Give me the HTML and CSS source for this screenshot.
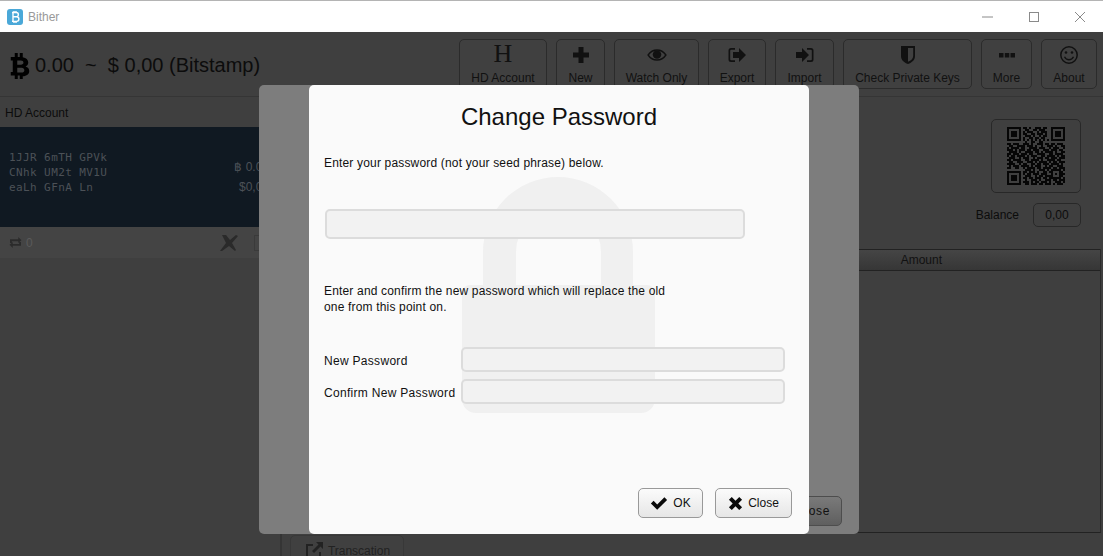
FILE: index.html
```html
<!DOCTYPE html>
<html lang="en">
<head>
    <meta charset="UTF-8">
    <title>Bither</title>
    <link rel="stylesheet" href="styles.css">
</head>
<body>

<div class="titlebar">
    <svg class="app-icon" viewBox="0 0 16 16"><rect width="16" height="16" rx="3" fill="#4aa8d8"/><path d="M6 3v10M5 3.500h4.200a2 2 0 0 1 0 4.300H6h3.600a2.200 2.200 0 0 1 0 4.600H5M7 2v2M9 2v2M7 12v2M9 12v2" fill="none" stroke="#fff" stroke-width="1.400"/></svg>
    <span class="app-name">Bither</span>
    <div class="window-controls">
        <svg viewBox="0 0 12 12"><path d="M0 6h11" stroke="#8a8a8a" fill="none"/></svg>
        <svg viewBox="0 0 12 12"><rect x="1.500" y="1.500" width="9" height="9" stroke="#8a8a8a" fill="none"/></svg>
        <svg viewBox="0 0 12 12"><path d="M1 1l10 10M11 1L1 11" stroke="#8a8a8a" fill="none"/></svg>
    </div>
</div>

<div class="app">
    <header class="topbar">
        <div class="total">
            <svg class="btc" viewBox="0.500 0 19.500 28"><path fill-rule="evenodd" d="M1 5h4V1h3v4h2V1h3v4.200c3.500.6 5.500 2.600 5.500 5.300 0 2-1 3.300-2.700 3.900 2.300.6 3.700 2.200 3.700 4.500 0 3.200-2.400 5-6.500 5.400V27h-3v-3.500H8V27H5v-3.500H1v-3.500h2V8.500H1zM7.500 8.500v4.300h3.700c1.500 0 2.500-.9 2.500-2.200s-1-2.100-2.500-2.100zM7.500 15.800v4.700h4.300c1.700 0 2.800-.9 2.800-2.300 0-1.500-1.100-2.400-2.800-2.400z"/></svg>
            <span>0.00 &nbsp;~&nbsp; $ 0,00 (Bitstamp)</span>
        </div>
        <nav class="toolbar">
            <button class="tool tool-hd"><span class="tool-h">H</span>HD Account</button>
            <button class="tool tool-new"><svg viewBox="0 0 20 20"><path d="M7.500 2h5v5.500H18v5h-5.500V18h-5v-5.500H2v-5h5.500z"/></svg>New</button>
            <button class="tool tool-watch"><svg viewBox="0 0 22 20"><path d="M1.200 10c2.500-3.700 5.800-5.500 9.800-5.500s7.300 1.800 9.800 5.500c-2.500 3.700-5.800 5.500-9.800 5.500S3.700 13.700 1.200 10z" fill="none" stroke="currentColor" stroke-width="1.500"/><circle cx="11" cy="9.500" r="4.700"/></svg>Watch Only</button>
            <button class="tool tool-export"><svg viewBox="0 0 20 20"><path d="M8 3H4a2.500 2.500 0 0 0-2.500 2.500v9A2.500 2.500 0 0 0 4 17h4v-1.800H4.200a1 1 0 0 1-1-1V5.800a1 1 0 0 1 1-1H8z"/><path d="M6 7h6V3l7 7-7 7v-4H6z"/></svg>Export</button>
            <button class="tool tool-import"><svg viewBox="0 0 20 20"><path d="M12 3h4a2.500 2.500 0 0 1 2.500 2.500v9A2.500 2.500 0 0 1 16 17h-4v-1.800h3.800a1 1 0 0 0 1-1V5.800a1 1 0 0 0-1-1H12z"/><path d="M1 7h6V3l7 7-7 7v-4H1z"/></svg>Import</button>
            <button class="tool tool-check"><svg viewBox="0 0 20 20"><path fill-rule="evenodd" d="M3 1h14v10c0 4-3 6.500-7 8-4-1.500-7-4-7-8zM10 3v13.800c3-1.200 5.200-3.200 5.200-5.800V3z"/></svg>Check Private Keys</button>
            <button class="tool tool-more"><svg viewBox="0 0 20 20"><path d="M2 8h4.500v4.500H2zM7.800 8h4.500v4.500H7.800zM13.500 8H18v4.500h-4.500z"/></svg>More</button>
            <button class="tool tool-about"><svg viewBox="0 0 20 20"><circle cx="10" cy="10" r="8.200" fill="none" stroke="currentColor" stroke-width="1.500"/><circle cx="7" cy="7.500" r="1.300"/><circle cx="13" cy="7.500" r="1.300"/><path d="M5.500 11.800c1 2 2.600 3 4.500 3s3.500-1 4.500-3" fill="none" stroke="currentColor" stroke-width="1.400"/></svg>About</button>
        </nav>
    </header>

    <div class="content">
        <aside class="sidebar">
            <div class="sidebar-title">HD Account</div>
            <div class="address-card">
                <div class="address">1JJR 6mTH GPVk<br>CNhk UM2t MV1U<br>eaLh GFnA Ln</div>
                <div class="address-balance">
                    <span>&#3647; 0.00</span>
                    <span>$0,00</span>
                </div>
            </div>
            <div class="address-foot">
                <svg class="foot-repeat" viewBox="0 0 14 12"><path d="M1 6.500V2.500h9V0l3.500 3.500L10 6.500V4.500H3v2zM13 5.500v4H4V12L.5 8.500 4 5.500v2h7v-2z"/></svg>
                <span>0</span>
                <svg class="foot-tools" viewBox="0 0 20 18"><path d="M2 1h4l4 5 6-5 2 1-6 7 4 7-1 1-6-5-7 5H0l6-8z"/></svg>
                <span class="foot-box"></span>
            </div>
        </aside>

        <main class="detail">
            <div class="detail-top">
                <div class="qr-box">
                    <svg class="qr" viewBox="0 0 29 29" shape-rendering="crispEdges">
                        <path class="qr-solid" d="M0 0h7v7H0zM1 1v5h5V1zM2 2h3v3H2zM22 0h7v7h-7zM23 1v5h5V1zM24 2h3v3h-3zM0 22h7v7H0zM1 23v5h5v-5zM2 24h3v3H2z"/>
                        <path class="qr-runs" d="M8 .5h2M11 .5h1M14 .5h3M18 .5h2M9 1.500h2M13 1.500h2M16 1.500h3M8 2.500h1M10 2.500h3M15 2.500h1M17 2.500h3M8 3.500h2M12 3.500h2M15 3.500h3M19 3.500h1M9 4.500h3M13 4.500h1M16 4.500h1M18 4.500h2M8 5.500h1M11 5.500h2M14 5.500h2M17 5.500h2M8 6.500h1M10 6.500h1M12 6.500h1M14 6.500h1M16 6.500h1M18 6.500h1M20 6.500h1M9 7.500h1M12 7.500h2M16 7.500h2M0 8.500h2M3 8.500h3M8 8.500h3M12 8.500h1M15 8.500h3M19 8.500h2M22 8.500h2M25 8.500h3M1 9.500h2M5 9.500h4M10 9.500h3M14 9.500h1M17 9.500h1M20 9.500h3M24 9.500h1M27 9.500h2M0 10.500h1M2 10.500h4M7 10.500h2M11 10.500h4M16 10.500h3M21 10.500h1M23 10.500h3M28 10.500h1M0 11.500h3M4 11.500h1M6 11.500h3M10 11.500h2M13 11.500h3M18 11.500h3M22 11.500h3M26 11.500h2M1 12.500h4M6 12.500h1M9 12.500h4M14 12.500h2M17 12.500h1M19 12.500h4M24 12.500h1M27 12.500h2M0 13.500h2M3 13.500h3M7 13.500h3M11 13.500h2M15 13.500h4M21 13.500h2M24 13.500h4M0 14.500h1M2 14.500h2M5 14.500h4M10 14.500h1M12 14.500h3M17 14.500h2M20 14.500h4M25 14.500h1M27 14.500h2M1 15.500h3M6 15.500h1M8 15.500h3M13 15.500h1M15 15.500h3M19 15.500h2M22 15.500h3M26 15.500h3M0 16.500h2M3 16.500h4M9 16.500h2M12 16.500h4M17 16.500h1M20 16.500h4M25 16.500h2M1 17.500h2M5 17.500h3M10 17.500h3M14 17.500h1M16 17.500h4M21 17.500h1M23 17.500h2M26 17.500h3M0 18.500h4M6 18.500h1M8 18.500h2M12 18.500h2M15 18.500h2M18 18.500h3M22 18.500h4M27 18.500h1M1 19.500h1M3 19.500h3M7 19.500h4M12 19.500h1M14 19.500h3M19 19.500h1M21 19.500h2M25 19.500h3M0 20.500h2M4 20.500h2M8 20.500h1M10 20.500h4M15 20.500h2M18 20.500h4M23 20.500h2M26 20.500h3M9 21.500h3M13 21.500h1M16 21.500h3M20 21.500h1M22 21.500h5M28 21.500h1M8 22.500h2M11 22.500h3M15 22.500h1M18 22.500h2M21 22.500h2M26 22.500h2M8 23.500h1M10 23.500h2M13 23.500h3M17 23.500h3M22 23.500h1M24 23.500h1M26 23.500h3M9 24.500h3M14 24.500h1M16 24.500h2M19 24.500h4M26 24.500h2M8 25.500h2M11 25.500h2M14 25.500h3M18 25.500h2M21 25.500h6M28 25.500h1M9 26.500h1M12 26.500h3M16 26.500h1M19 26.500h3M23 26.500h2M26 26.500h3M8 27.500h3M12 27.500h1M14 27.500h2M17 27.500h3M21 27.500h1M24 27.500h3M28 27.500h1M9 28.500h2M12 28.500h3M16 28.500h2M19 28.500h3M23 28.500h1M25 28.500h3"/>
                    </svg>
                </div>
                <div class="balance-row">
                    <span>Balance</span>
                    <div class="balance-value">0,00</div>
                </div>
            </div>
            <div class="table">
                <div class="table-head"><span>Amount</span></div>
                <div class="table-body"></div>
            </div>
            <div class="table-actions">
                <button class="plain-btn">Close</button>
            </div>
            <div class="tab-row">
                <button class="tab-btn"><svg viewBox="0 0 20 20"><path d="M9 4H3v13h13v-6" fill="none" stroke="currentColor" stroke-width="2"/><path d="M12 1h7v7l-2.500-2.500L10 12 8 10l6.500-6.500z"/></svg>Transcation</button>
            </div>
        </main>
    </div>
</div>

<div class="dialog-shade">
    <div class="dialog">
        <svg class="lock" viewBox="0 0 193 236"><path d="M21 75a75 75 0 0 1 150 0v33h-32V75a42.500 42.500 0 0 0-85 0v33H21zM8 108h177a8 8 0 0 1 8 8v106a14 14 0 0 1-14 14H14a14 14 0 0 1-14-14V116a8 8 0 0 1 8-8z"/></svg>
        <h2 class="dialog-title">Change Password</h2>
        <p class="dialog-text first">Enter your password (not your seed phrase) below.</p>
        <div class="field field-wide"></div>
        <p class="dialog-text second">Enter and confirm the new password which will replace the old one from this point on.</p>
        <div class="form-row">
            <label>New Password</label>
            <div class="field"></div>
        </div>
        <div class="form-row">
            <label>Confirm New Password</label>
            <div class="field"></div>
        </div>
        <div class="dialog-actions">
            <button class="dialog-btn btn-ok"><svg viewBox="0 0 20 16"><path d="M1 8l3-3 4 4 8-8 3 3-11 11z"/></svg>OK</button>
            <button class="dialog-btn btn-close"><svg viewBox="0 0 16 16"><path d="M1 4l3-3 4 4 4-4 3 3-4 4 4 4-3 3-4-4-4 4-3-3 4-4z"/></svg>Close</button>
        </div>
    </div>
</div>

</body>
</html>
```

FILE: styles.css
```css
html, body {
    margin: 0;
    padding: 0;
    height: 556px;
    overflow: hidden;
}
body {
    font-family: "Liberation Sans", Arial, sans-serif;
    font-size: 12px;
    color: #111;
    background: #3f3f3f;
    display: flex;
    flex-direction: column;
}
button {
    font-family: inherit;
    margin: 0;
}

/* Window title bar */
.titlebar {
    height: 31px;
    flex: none;
    background: white;
    border-top: 1px solid #b4b4b4;
    display: flex;
    align-items: center;
    padding-left: 7px;
}
.app-icon {
    width: 16px;
    height: 16px;
    margin-right: 5px;
}
.app-name {
    color: #999;
    font-size: 12px;
}
.window-controls {
    margin-left: auto;
    display: flex;
    gap: 34px;
    padding-right: 17px;
}
.window-controls svg {
    width: 12px;
    height: 12px;
}

/* Main app, dimmed */
.app {
    flex: 1;
    display: flex;
    flex-direction: column;
    min-height: 0;
}
.topbar {
    height: 64px;
    flex: none;
    display: flex;
    justify-content: space-between;
    border-bottom: 1px solid #353535;
}
.total {
    display: flex;
    align-items: center;
    gap: 5px;
    padding: 3px 0 0 10px;
    font-size: 20px;
    color: #0c0c0c;
}
.btc {
    width: 20px;
    height: 28px;
}
.toolbar {
    display: flex;
    gap: 9px;
    padding: 7px 6px 0 0;
}
.tool {
    height: 50px;
    box-sizing: border-box;
    background: #404040;
    border: 1px solid #2b2b2b;
    border-radius: 5px;
    color: #111;
    font-size: 12px;
    padding: 0 0 3px;
    display: flex;
    flex-direction: column;
    align-items: center;
    justify-content: flex-end;
}
.tool svg {
    width: 20px;
    height: 20px;
    margin-bottom: 6px;
    fill: currentColor;
}
.tool-h {
    font-family: "Liberation Serif", serif;
    font-size: 26px;
    line-height: 24px;
    margin-bottom: 5px;
}
.tool-hd { width: 88px; }
.tool-new { width: 49px; }
.tool-watch { width: 85px; }
.tool-export { width: 58px; }
.tool-import { width: 59px; }
.tool-check { width: 129px; }
.tool-more { width: 51px; }
.tool-about { width: 56px; }

.content {
    flex: 1;
    display: flex;
    min-height: 0;
}
.sidebar {
    width: 280px;
    flex: none;
    display: flex;
    flex-direction: column;
    border-right: 2px solid #353535;
}
.sidebar-title {
    height: 30px;
    line-height: 32px;
    padding-left: 5px;
    color: #0c0c0c;
}
.address-card {
    height: 100px;
    box-sizing: border-box;
    background: #101922;
    display: flex;
    justify-content: space-between;
    align-items: center;
    padding-left: 9px;
    color: #4c5157;
}
.address {
    font-family: "DejaVu Sans Mono", monospace;
    font-size: 11px;
    letter-spacing: 0.4px;
    line-height: 15px;
    white-space: nowrap;
    padding-bottom: 10px;
}
.address-balance {
    display: flex;
    flex-direction: column;
    align-items: flex-end;
    gap: 6px;
    padding: 0 11px 1px 0;
    font-size: 12px;
}
.address-foot {
    height: 31px;
    background: #444;
    display: flex;
    align-items: center;
    padding-left: 9px;
    gap: 4px;
    color: #5a5a5a;
}
.foot-repeat {
    width: 13px;
    height: 11px;
    fill: #2b2b2b;
}
.foot-tools {
    width: 20px;
    height: 18px;
    margin-left: 183px;
    fill: #2a2a2a;
}
.foot-box {
    width: 12px;
    height: 14px;
    margin-left: 10px;
    border: 1px solid #3a3a3a;
}

.detail {
    flex: 1;
    display: flex;
    flex-direction: column;
    min-width: 0;
}
.detail-top {
    height: 152px;
    flex: none;
    display: flex;
    flex-direction: column;
    align-items: flex-end;
    padding: 22px 22px 0 0;
    box-sizing: border-box;
}
.qr-box {
    width: 90px;
    height: 74px;
    box-sizing: border-box;
    border: 1px solid #282828;
    border-radius: 5px;
    display: flex;
    align-items: center;
    justify-content: center;
}
.qr {
    width: 58px;
    height: 58px;
}
.qr-solid {
    fill: #060606;
    fill-rule: evenodd;
}
.qr-runs {
    fill: none;
    stroke: #060606;
    stroke-width: 1;
}
.balance-row {
    display: flex;
    align-items: center;
    gap: 14px;
    margin-top: 10px;
    color: #0c0c0c;
}
.balance-value {
    width: 48px;
    height: 24px;
    box-sizing: border-box;
    border: 1px solid #282828;
    border-radius: 5px;
    text-align: center;
    line-height: 22px;
}
.table {
    height: 284px;
    flex: none;
    margin-right: 2px;
    border-right: 1px solid #2b2b2b;
    border-bottom: 1px solid #222;
    box-sizing: border-box;
}
.table-head {
    height: 22px;
    box-sizing: border-box;
    border-top: 1px solid #222;
    border-bottom: 1px solid #222;
    background: linear-gradient(#454545, #363636);
    display: flex;
    justify-content: flex-end;
    line-height: 21px;
    padding-right: 158px;
}
/* sits above the shade, only its right end shows past the dialog */
.table-actions {
    position: absolute;
    z-index: 1;
    top: 496px;
    left: 760px;
}
.plain-btn {
    width: 82px;
    height: 30px;
    background: linear-gradient(#7a7a7a, #5f5f5f);
    border: 1px solid #4d4d4d;
    border-radius: 5px;
    color: #111;
    font-size: 12px;
    letter-spacing: 0.6px;
    text-align: right;
    padding: 0 11px 0 0;
}
.tab-row {
    padding: 2px 0 0 8px;
}
.tab-btn {
    width: 114px;
    height: 40px;
    background: #404040;
    border: 1px solid #383838;
    border-radius: 5px;
    color: #222;
    font-size: 12px;
    display: flex;
    align-items: flex-start;
    justify-content: center;
    gap: 4px;
    padding: 5px 0 0;
    line-height: 20px;
}
.tab-btn svg {
    width: 20px;
    height: 20px;
    fill: currentColor;
}

/* Change password dialog on top */
.dialog-shade {
    position: absolute;
    left: 259px;
    top: 85px;
    width: 600px;
    height: 449px;
    background: #7d7d7d;
    border-radius: 5px;
    display: flex;
    justify-content: center;
}
.dialog {
    position: relative;
    z-index: 2;
    width: 500px;
    box-sizing: border-box;
    background: #fafafa;
    border-radius: 5px;
    padding: 0 15px;
    display: flex;
    flex-direction: column;
}
.lock {
    position: absolute;
    left: 153px;
    top: 92px;
    width: 193px;
    height: 236px;
    fill: #f0f0f0;
}
.dialog-title, .dialog-text, .field, .form-row, .dialog-actions {
    position: relative;
}
.dialog-title {
    margin: 17px 0 0;
    font-size: 24px;
    line-height: 29px;
    font-weight: normal;
    text-align: center;
    color: #111;
}
.dialog-text {
    margin: 0;
    line-height: 16px;
    width: 350px;
    color: #111;
    letter-spacing: 0.17px;
}
.dialog-text.first {
    margin-top: 24px;
}
.dialog-text.second {
    margin-top: 44px;
}
.field {
    flex: 1;
    height: 25px;
    box-sizing: border-box;
    background: #f2f2f2;
    border: 2px solid #dcdcdc;
    border-radius: 5px;
}
.field-wide {
    flex: none;
    width: 420px;
    height: 30px;
    margin: 38px 0 0 1px;
}
.form-row {
    display: flex;
    align-items: center;
    height: 25px;
    margin: 0 9px 7px 0;
}
.form-row label {
    width: 137px;
    flex: none;
    letter-spacing: 0.3px;
    padding-top: 2px;
}
.second + .form-row {
    margin-top: 32px;
}
.dialog-actions {
    margin-top: auto;
    padding: 0 2px 16px 0;
    display: flex;
    justify-content: flex-end;
    gap: 12px;
}
.dialog-btn {
    height: 30px;
    box-sizing: border-box;
    padding: 0;
    background: linear-gradient(#fbfbfb, #e6e6e6);
    border: 1px solid #999;
    border-radius: 5px;
    color: #111;
    font-size: 12px;
    display: flex;
    align-items: center;
    justify-content: center;
    gap: 5px;
}
.dialog-btn svg {
    height: 15px;
    fill: #0a0a0a;
}
.btn-ok { width: 65px; }
.btn-ok svg { width: 18px; }
.btn-close { width: 77px; }
.btn-close svg { width: 15px; }
```
